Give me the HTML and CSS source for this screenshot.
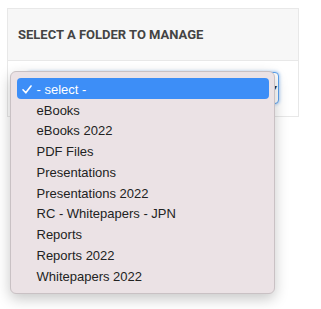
FILE: index.html
```html
<!DOCTYPE html>
<html>
<head>
<meta charset="utf-8">
<link rel="stylesheet" href="styles.css">
</head>
<body>
<div class="card">
  <div class="card-header"><h3 class="title">SELECT A FOLDER TO MANAGE</h3></div>
  <div class="card-body">
    <div class="select-wrap">
      <div class="select"><span class="arrow">&#9662;</span></div>
      <ul class="menu">
        <li class="item selected"><svg class="check" width="10" height="9" viewBox="0 0 10 9"><path d="M1 4.8 L3.8 7.8 L9 1" fill="none" stroke="#ffffff" stroke-width="1.6" stroke-linecap="round" stroke-linejoin="round"/></svg>- select -</li>
        <li class="item">eBooks</li>
        <li class="item">eBooks 2022</li>
        <li class="item">PDF Files</li>
        <li class="item">Presentations</li>
        <li class="item">Presentations 2022</li>
        <li class="item">RC - Whitepapers - JPN</li>
        <li class="item">Reports</li>
        <li class="item">Reports 2022</li>
        <li class="item">Whitepapers 2022</li>
      </ul>
    </div>
  </div>
</div>
</body>
</html>
```
FILE: styles.css
```css
html, body {
  margin: 0;
  padding: 0;
  background: #ffffff;
}
html {
  height: 309px;
}
body {
  min-height: 301px;
  padding: 8px 0 0 7px;
  font-family: "Liberation Sans", Arial, sans-serif;
}
.card {
  width: 290px;
  border: 1px solid #e8e8e8;
  background: #ffffff;
}
.card-header {
  height: 51px;
  background: #f7f7f7;
  border-bottom: 1px solid #e8e8e8;
  display: flex;
  align-items: center;
  padding-left: 10px;
}
.title {
  margin: 0;
  font-family: Roboto, "Liberation Sans", sans-serif;
  font-weight: 700;
  font-size: 13px;
  color: #444444;
}
.card-body {
  padding: 11px 19px 12px 19px;
}
.select-wrap {
  position: relative;
}
.select {
  height: 30px;
  border: 1px solid #5aa0ee;
  border-radius: 4px;
  box-shadow: 0 0 3px 1px rgba(90, 160, 238, 0.45);
  background: #ffffff;
  display: flex;
  justify-content: flex-end;
  align-items: center;
  padding-right: 1px;
}
.arrow {
  font-size: 8px;
  color: #333;
  line-height: 1;
}
.menu {
  position: absolute;
  left: -17px;
  top: -1px;
  width: 252px;
  margin: 0;
  list-style: none;
  padding: 6px 5px 7px 6px;
  background: #ebe2e5;
  border: 1px solid #c9c1c4;
  border-radius: 6px;
  box-shadow: 0 5px 14px rgba(0, 0, 0, 0.22);
  z-index: 2;
}
.item {
  box-sizing: border-box;
  height: 20.8px;
  padding-top: 1.5px;
  line-height: 20.8px;
  font-size: 13px;
  color: #222222;
  padding-left: 19.5px;
  position: relative;
  white-space: nowrap;
}
.item.selected {
  background: #3d8ef7;
  color: #ffffff;
  border-radius: 4px;
  height: 21px;
}
.check {
  position: absolute;
  left: 5px;
  top: 6.5px;
}
```
